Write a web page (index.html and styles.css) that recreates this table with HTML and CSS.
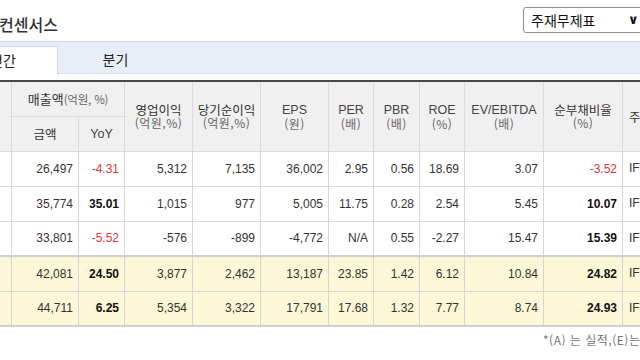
FILE: index.html
```html
<!DOCTYPE html>
<html lang="ko">
<head>
<meta charset="utf-8">
<link rel="stylesheet" href="styles.css">
</head>
<body>
<div class="page">
  <div class="head">
    <div class="title">컨센서스</div>
    <div class="select"><span class="sel-text">주재무제표</span><span class="chev">∨</span></div>
  </div>
  <div class="tabs">
    <div class="tab active">연간</div>
    <div class="tab">분기</div>
  </div>
  <table class="grid">
    <colgroup>
      <col class="w101"><col class="w67"><col class="w46"><col class="w68"><col class="w68"><col class="w68"><col class="w45"><col class="w46"><col class="w45"><col class="w79"><col class="w79"><col class="w80">
    </colgroup>
    <thead>
      <tr class="h1">
        <th rowspan="2" class="c0">재무년월</th>
        <th colspan="2" class="sales">매출액<span class="u">(억원, %)</span></th>
        <th rowspan="2">영업이익<br><span class="sub">(억원,%)</span></th>
        <th rowspan="2">당기순이익<br><span class="sub">(억원,%)</span></th>
        <th rowspan="2"><span class="en">EPS</span><br><span class="sub">(원)</span></th>
        <th rowspan="2"><span class="en">PER</span><br><span class="sub">(배)</span></th>
        <th rowspan="2"><span class="en">PBR</span><br><span class="sub">(배)</span></th>
        <th rowspan="2"><span class="en">ROE</span><br><span class="sub">(%)</span></th>
        <th rowspan="2"><span class="en">EV/EBITDA</span><br><span class="sub">(배)</span></th>
        <th rowspan="2">순부채비율<br><span class="sub">(%)</span></th>
        <th rowspan="2" class="last">주재무제표</th>
      </tr>
      <tr class="h2">
        <th>금액</th>
        <th><span class="en">YoY</span></th>
      </tr>
    </thead>
    <tbody>
      <tr>
        <td class="c0">2019.12(A)</td><td>26,497</td><td class="red">-4.31</td><td>5,312</td><td>7,135</td><td>36,002</td><td>2.95</td><td>0.56</td><td>18.69</td><td>3.07</td><td class="red">-3.52</td><td class="last">IFRS연결</td>
      </tr>
      <tr>
        <td class="c0">2020.12(A)</td><td>35,774</td><td class="b">35.01</td><td>1,015</td><td>977</td><td>5,005</td><td>11.75</td><td>0.28</td><td>2.54</td><td>5.45</td><td class="b">10.07</td><td class="last">IFRS연결</td>
      </tr>
      <tr>
        <td class="c0">2021.12(A)</td><td>33,801</td><td class="red">-5.52</td><td>-576</td><td>-899</td><td>-4,772</td><td>N/A</td><td>0.55</td><td>-2.27</td><td>15.47</td><td class="b">15.39</td><td class="last">IFRS연결</td>
      </tr>
      <tr class="est first-est">
        <td class="c0">2022.12(E)</td><td>42,081</td><td class="b">24.50</td><td>3,877</td><td>2,462</td><td>13,187</td><td>23.85</td><td>1.42</td><td>6.12</td><td>10.84</td><td class="b">24.82</td><td class="last">IFRS연결</td>
      </tr>
      <tr class="est">
        <td class="c0">2023.12(E)</td><td>44,711</td><td class="b">6.25</td><td>5,354</td><td>3,322</td><td>17,791</td><td>17.68</td><td>1.32</td><td>7.77</td><td>8.74</td><td class="b">24.93</td><td class="last">IFRS연결</td>
      </tr>
    </tbody>
  </table>
  <div class="note">*(A) 는 실적,(E)는 컨센서스</div>
</div>
</body>
</html>
```

FILE: styles.css
```css
* { box-sizing: border-box; }
html, body { margin: 0; padding: 0; background: #fff; }
html { overflow: hidden; }
body { width: 640px; height: 360px; overflow: hidden; }
.page {
  margin-left: -90px;
  width: 820px;
  font-family: "Noto Sans CJK KR", "Noto Sans", sans-serif;
  color: #333;
}
.head {
  display: grid;
  grid-template-columns: 613px 140px;
  align-items: start;
  height: 41px;
}
.title {
  padding-left: 89px;
  padding-top: 13px;
  font-size: 16px;
  line-height: 22px;
  color: #333;
  font-weight: 500;
}
.select {
  margin-top: 7px;
  height: 26px;
  border: 1px solid #8f8f8f;
  border-radius: 3px;
  display: grid;
  grid-template-columns: 97px 16px;
  padding-left: 7px;
  font-size: 14px;
  line-height: 24px;
  color: #111;
}
.sel-text { white-space: nowrap; }
.chev {
  font-family: "DejaVu Sans", sans-serif;
  font-weight: bold;
  font-size: 13px;
  line-height: 24px;
  color: #111;
}
.tabs {
  display: flex;
  height: 33px;
  background: #e8eef8;
  border-top: 1px solid #d2dae6;
  border-bottom: 1px solid #d9e0ea;
  padding-top: 4px;
  padding-left: 38px;
  margin-bottom: 6px;
}
.tab {
  width: 110px;
  text-align: center;
  font-size: 14px;
  line-height: 26px;
  color: #222;
}
.tab.active {
  background: #fff;
  border: 1px solid #cfd6e1;
  border-bottom: none;
  margin-bottom: -1px;
}
.tab + .tab { width: 115px; }
.grid {
  border-collapse: collapse;
  table-layout: fixed;
  width: 792px;
  border-top: 2px solid #4a4a4a;
  border-bottom: 2px solid #cfcfcf;
}
.w101 { width: 101px; }
.w67 { width: 67px; }
.w46 { width: 46px; }
.w68 { width: 68px; }
.w45 { width: 45px; }
.w79 { width: 79px; }
.w80 { width: 80px; }
.grid th {
  background: #f0f0f0;
  font-weight: normal;
  font-size: 12.5px;
  line-height: 13px;
  color: #333;
  border: 1px solid #dcdcdc;
  padding: 0;
  text-align: center;
}
.grid tr.h1 th { height: 35px; }
.grid tr.h2 th { height: 35px; }
.grid th .sub { color: #666; font-size: 12px; letter-spacing: 0.5px; }
.grid th .u { color: #666; font-size: 11.5px; letter-spacing: -0.2px; }
.grid th .en { font-family: "Liberation Sans", Arial, sans-serif; font-size: 12.5px; color: #444; }
.grid th.sales { font-size: 13px; }
.grid td {
  height: 35px;
  border: 1px solid #d6d6d6;
  padding: 0 5px 0 0;
  text-align: right;
  font-family: "Liberation Sans", Arial, sans-serif;
  font-size: 12px;
  color: #333;
  white-space: nowrap;
  overflow: hidden;
}
.grid td.red { color: #e0373d; }
.grid td.b { font-weight: bold; color: #111; }
.grid .c0 { text-align: left; padding-left: 4px; color: #333; }
.grid .last { text-align: left; padding-left: 6px; }
.grid tr.est td { background: #fcf7d6; }
.grid tr.first-est td { border-top: 2px solid #d0d0d0; }
.note {
  padding-left: 633px;
  padding-top: 4px;
  white-space: nowrap;
  font-size: 12px;
  color: #777;
  letter-spacing: 0.5px;
}
```
